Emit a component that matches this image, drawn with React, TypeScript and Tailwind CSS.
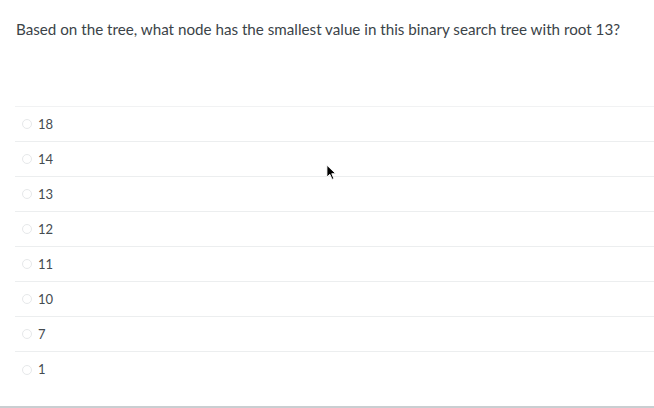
const options = ["18", "14", "13", "12", "11", "10", "7", "1"];

function Cursor() {
  return (
    <svg
      aria-hidden="true"
      viewBox="0 0 12 18"
      className="pointer-events-none absolute left-[326px] top-[164px] h-[17px] w-[11px]"
    >
      <path d="M1 1 L1 14 L4.2 11 L6.6 16.5 L8.6 15.6 L6.3 10.3 L10.6 10.3 Z" fill="#000" stroke="#fff" strokeWidth="1" strokeLinejoin="round" />
    </svg>
  );
}

export default function App() {
  return (
    <div className="relative h-[408px] w-[654px] overflow-hidden bg-white font-['Lato','Noto_Sans',sans-serif] text-[#3b4348]">
      <div className="px-4 pt-[20px]">
        <p className="text-[15.2px] leading-[19px]">
          Based on the tree, what node has the smallest value in this binary search tree with root 13?
        </p>
      </div>

      <div className="mt-[67px] ml-[15px] border-t border-[#f1f2f3]">
        {options.map((opt, i) => (
          <div
            key={opt}
            className={`flex h-[35px] items-center gap-[6px] pl-[7px] ${
              i < options.length - 1 ? "border-b border-[#eceeef]" : ""
            }`}
          >
            <span className="h-[10px] w-[10px] rounded-full border border-[#e6e8ea] bg-white" />
            <span className="text-[13px] leading-none text-[#444b50]">{opt}</span>
          </div>
        ))}
      </div>

      <div className="absolute bottom-0 left-0 right-0 h-[2px] bg-[#c9ced1]" />
      <Cursor />
    </div>
  );
}
